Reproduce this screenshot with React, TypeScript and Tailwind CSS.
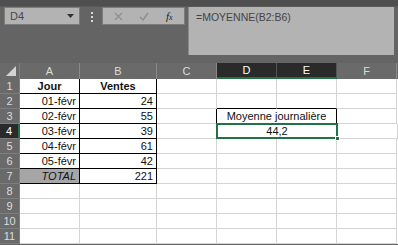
import React from 'react';

const COLS = [
  { key: 'A', w: 60 },
  { key: 'B', w: 77 },
  { key: 'C', w: 60 },
  { key: 'D', w: 60 },
  { key: 'E', w: 60 },
  { key: 'F', w: 60 },
];

const DATA: [string, string][] = [
  ['01-févr', '24'],
  ['02-févr', '55'],
  ['03-févr', '39'],
  ['04-févr', '61'],
  ['05-févr', '42'],
];

function Cell({ w, className = '', children }: { w: number; className?: string; children?: React.ReactNode }) {
  return (
    <div
      className={`h-full shrink-0 border-r border-b border-[#d4d4d4] flex items-center px-[3px] ${className}`}
      style={{ width: w }}
    >
      {children}
    </div>
  );
}

function RowHead({ n, active }: { n: number; active?: boolean }) {
  return (
    <div
      className={`w-[20px] h-full shrink-0 flex items-center justify-center border-b border-[#7e7e7e] ${
        active ? 'bg-[#2a2a2a] text-white border-r-2 border-r-[#217346]' : 'bg-[#6a6a6a] text-[#dcdcdc] border-r border-r-[#7e7e7e]'
      }`}
    >
      {n}
    </div>
  );
}

export default function App() {
  const rows = [];
  for (let r = 1; r <= 11; r++) {
    let cells: React.ReactNode;
    if (r === 1) {
      cells = (
        <>
          <Cell w={60} className="justify-center font-bold border-r-black border-b-black">Jour</Cell>
          <Cell w={77} className="justify-center font-bold border-r-black border-b-black">Ventes</Cell>
          <Cell w={60} />
          <Cell w={60} />
          <Cell w={60} />
          <Cell w={60} />
        </>
      );
    } else if (r >= 2 && r <= 6) {
      const [d, v] = DATA[r - 2];
      cells = (
        <>
          <Cell w={60} className="justify-end border-r-black border-b-black">{d}</Cell>
          <Cell w={77} className="justify-end border-r-black border-b-black">{v}</Cell>
          <Cell w={60} />
          {r === 2 ? (
            <>
              <Cell w={60} className="border-b-black" />
              <Cell w={60} className="border-b-black" />
            </>
          ) : r === 3 ? (
            <div className="h-full shrink-0 border-l border-l-black -ml-[1px] w-[121px] border-r border-r-black border-b border-b-[#217346] flex items-center justify-center">
              Moyenne journalière
            </div>
          ) : r === 4 ? (
            <div className="relative shrink-0 -ml-[1px] -mt-[1px] h-[16px] w-[122px] border-2 border-[#217346] flex items-center justify-center self-start">
              44,2
              <div className="absolute -right-[4px] -bottom-[4px] w-[5px] h-[5px] bg-[#217346] border border-white" />
            </div>
          ) : (
            <>
              <Cell w={60} />
              <Cell w={60} />
            </>
          )}
          <Cell w={60} />
        </>
      );
    } else if (r === 7) {
      cells = (
        <>
          <Cell w={60} className="justify-end italic bg-[#a6a6a6] border-r-black border-b-black">TOTAL</Cell>
          <Cell w={77} className="justify-end border-r-black border-b-black">221</Cell>
          <Cell w={60} />
          <Cell w={60} />
          <Cell w={60} />
          <Cell w={60} />
        </>
      );
    } else {
      cells = COLS.map((c) => <Cell key={c.key} w={c.w} />);
    }
    rows.push(
      <div key={r} className="flex h-[15px]">
        <RowHead n={r} active={r === 4} />
        <div className="flex h-full bg-white text-[#111]">{cells}</div>
        <div className="h-full flex-1 bg-white" />
      </div>
    );
  }

  return (
    <div
      className="w-[398px] h-[245px] overflow-hidden bg-[#646464] text-[11px] leading-none"
      style={{ fontFamily: '"Liberation Sans", Arial, sans-serif' }}
    >
      <div className="h-[7px] bg-[#4f4f4f] border-b border-[#5a5a5a]" />
      <div className="flex items-start h-[48px]">
        <div className="ml-[4px] w-[76px] h-[18px] bg-[#b3b3b3] border border-[#7c7c7c] flex items-center justify-between pl-[5px] pr-[5px] text-[#4a4a4a]">
          <span>D4</span>
          <svg width="7" height="4" viewBox="0 0 7 4"><path d="M0 0h7L3.5 4z" fill="#333" /></svg>
        </div>
        <div className="ml-[11px] mt-[5px] flex flex-col gap-[2px]">
          <div className="w-[2px] h-[2px] bg-[#d8d8d8]" />
          <div className="w-[2px] h-[2px] bg-[#d8d8d8]" />
          <div className="w-[2px] h-[2px] bg-[#d8d8d8]" />
        </div>
        <div className="ml-[9px] w-[83px] h-[18px] bg-[#b3b3b3] border border-[#7c7c7c] flex items-center">
          <svg className="ml-[11px]" width="9" height="9" viewBox="0 0 9 9">
            <path d="M1 1l7 7M8 1l-7 7" stroke="#8e8e8e" strokeWidth="1.2" />
          </svg>
          <svg className="ml-[16px]" width="10" height="9" viewBox="0 0 10 9">
            <path d="M1 5l3 3 5-7" stroke="#8e8e8e" strokeWidth="1.4" fill="none" />
          </svg>
          <span className="ml-[17px] italic text-[#222] text-[11px]" style={{ fontFamily: '"Liberation Serif", serif' }}>
            f<span className="text-[8px]">x</span>
          </span>
        </div>
        <div className="ml-[3px] w-[206px] h-[48px] bg-[#b3b3b3] border-l border-[#8a8a8a] pl-[7px] pt-[5px] text-[#444] text-[10.5px]">
          =MOYENNE(B2:B6)
        </div>
      </div>
      <div className="h-[8px]" />
      <div className="flex h-[16px]">
        <div className="w-[20px] h-full shrink-0 relative bg-[#6a6a6a] border-r border-[#7e7e7e]">
          <svg className="absolute right-[3px] bottom-[3px]" width="10" height="10" viewBox="0 0 10 10">
            <path d="M10 0v10H0z" fill="#d4d4d4" />
          </svg>
        </div>
        {COLS.map((c) => {
          const sel = c.key === 'D' || c.key === 'E';
          return (
            <div
              key={c.key}
              className={`h-full shrink-0 flex items-center justify-center border-r ${
                sel
                  ? 'bg-[#2a2a2a] text-white border-r-[#555] border-b-2 border-b-[#217346]'
                  : 'bg-[#6a6a6a] text-[#dcdcdc] border-r-[#8a8a8a]'
              }`}
              style={{ width: c.w }}
            >
              {c.key}
            </div>
          );
        })}
        <div className="flex-1 bg-[#6a6a6a]" />
      </div>
      {rows}
    </div>
  );
}
